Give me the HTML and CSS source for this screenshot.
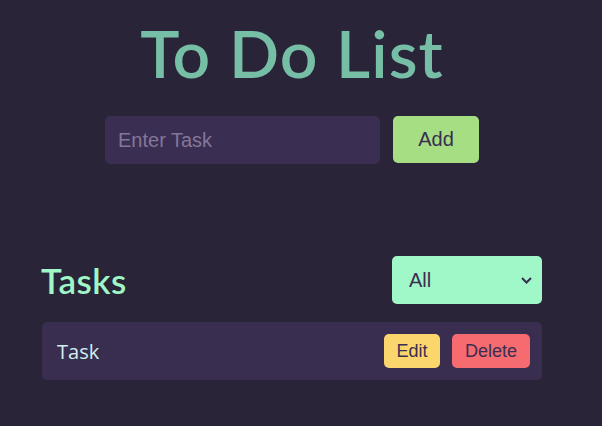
FILE: index.html
```html
<!DOCTYPE html>
<html lang="en">
<head>
<meta charset="utf-8">
<title>To Do List</title>
<link rel="stylesheet" href="styles.css">
</head>
<body>
<div class="page">
  <main class="app">
    <h1 class="title">To Do List</h1>
    <form class="add-form">
      <input class="task-input" type="text" placeholder="Enter Task">
      <button class="btn btn-add" type="button">Add</button>
    </form>
    <section class="tasks">
      <div class="tasks-head">
        <h2 class="tasks-title">Tasks</h2>
        <div class="select-wrap">
          <select class="filter">
            <option>All</option>
            <option>Completed</option>
            <option>Pending</option>
          </select>
          <svg class="chev" width="11" height="7" viewBox="0 0 11 7"><path d="M1 1l4.5 4.5L10 1" fill="none" stroke="#3a2e50" stroke-width="2"/></svg>
        </div>
      </div>
      <ul class="task-list">
        <li class="task">
          <span class="task-name">Task</span>
          <div class="task-actions">
            <button class="btn btn-edit" type="button">Edit</button>
            <button class="btn btn-delete" type="button">Delete</button>
          </div>
        </li>
      </ul>
    </section>
  </main>
</div>
</body>
</html>
```
FILE: styles.css
```css
* { box-sizing: border-box; }
html, body { margin: 0; padding: 0; }
body {
  background: #2a2438;
  min-height: 426px;
  font-family: "Liberation Sans", Arial, sans-serif;
}
.page {
  width: 584px;
  display: flex;
  justify-content: center;
}
.app {
  width: 500px;
  display: flex;
  flex-direction: column;
  align-items: center;
}
.title {
  margin: 15px 0 0;
  font-family: Lato, "Noto Sans", sans-serif;
  font-weight: 600;
  font-size: 66px;
  line-height: 76px;
  color: #77bea6;
  letter-spacing: 1.1px;
}
.add-form {
  margin-top: 25px;
  display: flex;
  gap: 13px;
}
.task-input {
  width: 275px;
  height: 48px;
  border: none;
  border-radius: 5px;
  background: #3a2e52;
  padding: 0 13px;
  font-family: "Liberation Sans", Arial, sans-serif;
  font-size: 20px;
  color: #e6e0f0;
  outline: none;
}
.task-input::placeholder { color: #837799; }
.btn {
  border: none;
  border-radius: 5px;
  font-family: "Liberation Sans", Arial, sans-serif;
  color: #3a2e52;
  cursor: pointer;
}
.btn-add {
  width: 86px;
  height: 47px;
  background: #a6de84;
  font-size: 20px;
}
.tasks {
  align-self: stretch;
  margin-top: 92px;
}
.tasks-head {
  display: flex;
  justify-content: space-between;
  align-items: center;
}
.tasks-title {
  margin: 0 0 0 -1px;
  font-family: Lato, "Noto Sans", sans-serif;
  font-weight: 600;
  font-size: 35px;
  color: #9ff6c6;
  letter-spacing: 0.5px;
}
.select-wrap {
  position: relative;
  width: 150px;
  height: 48px;
}
.filter {
  appearance: none;
  -webkit-appearance: none;
  width: 100%;
  height: 100%;
  border: none;
  border-radius: 5px;
  background: #a0f7c8;
  padding: 0 17px;
  font-family: "Liberation Sans", Arial, sans-serif;
  font-size: 20px;
  color: #3a2e52;
  outline: none;
}
.chev {
  position: absolute;
  right: 10px;
  top: 21px;
  pointer-events: none;
}
.task-list {
  list-style: none;
  margin: 18px 0 0;
  padding: 0;
}
.task {
  height: 58px;
  background: #3a2e50;
  border-radius: 5px;
  display: flex;
  align-items: center;
  justify-content: space-between;
  padding: 0 12px 0 15px;
}
.task-name {
  font-family: "Open Sans", "Noto Sans", sans-serif;
  font-size: 20px;
  color: #d2f0ee;
}
.task-actions {
  display: flex;
  gap: 12px;
}
.btn-edit, .btn-delete {
  height: 34px;
  font-size: 18px;
  padding: 0;
}
.btn-edit { width: 56px; background: #fbd66c; }
.btn-delete { width: 78px; background: #f56b6f; }
```
